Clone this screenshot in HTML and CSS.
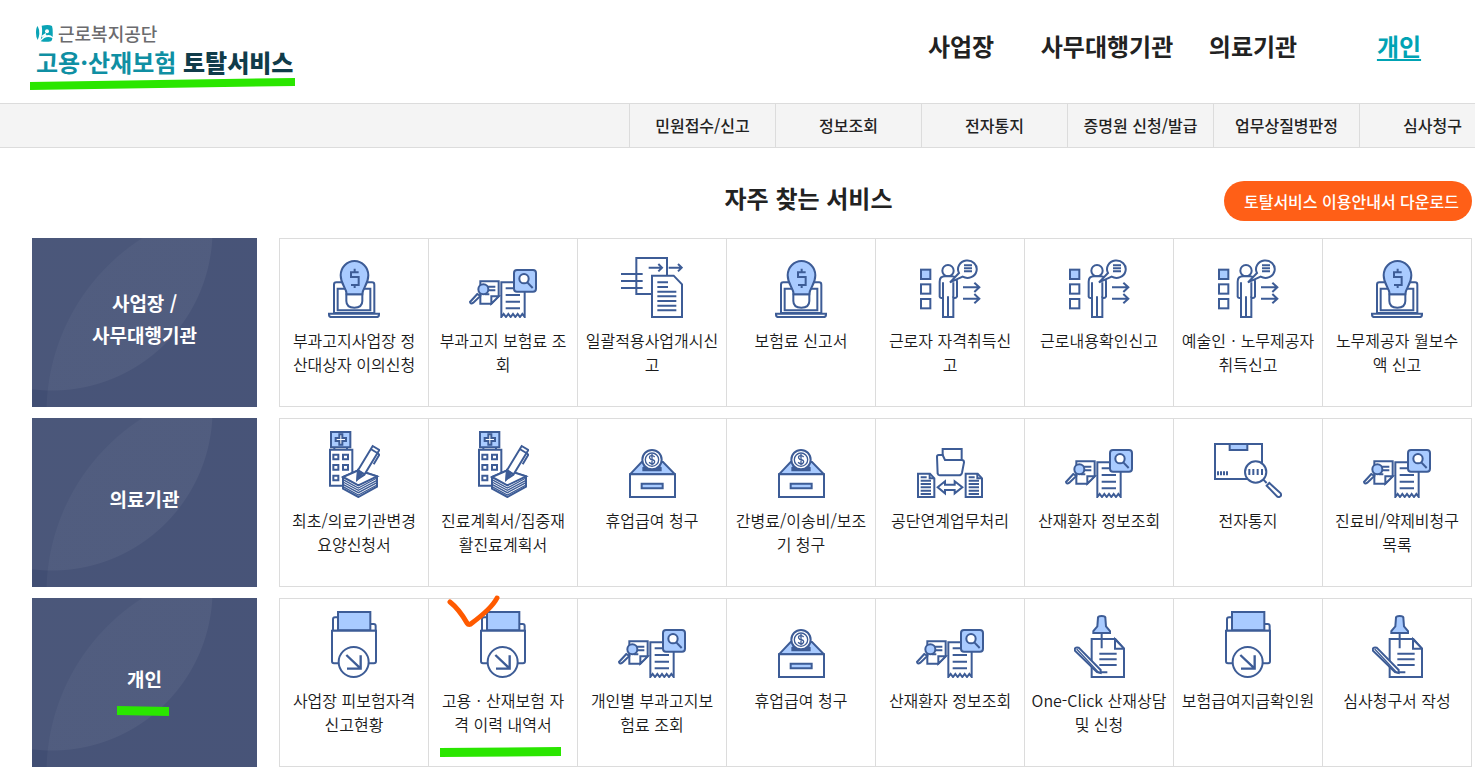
FILE: index.html
```html
<!DOCTYPE html>
<html lang="ko">
<head>
<meta charset="utf-8">
<meta name="viewport" content="width=device-width, initial-scale=1">
<title>고용·산재보험 토탈서비스</title>
<link rel="stylesheet" href="styles.css">
</head>
<body>
<svg class="sprite" aria-hidden="true">
  <symbol id="i-bulb" viewBox="159 75 156 174">
    <path class="w" d="M177 234V149q0-7 7-7h107q7 0 7 7v85z"/>
    <path class="w" d="M188 226V161h98v65z"/>
    <path class="w" d="M162 236h150v3q0 7-8 7H170q-8 0-8-7z"/>
    <path class="w" d="M214 178h48v20q0 20-24 20t-24-20z"/>
    <path class="b" d="M215 178c0-20-18-28-18-57a41.500 43 0 0 1 83 0c0 29-18 37-18 57z"/>
    <path class="l" d="M251 112h-23v14h23v24h-23M239 101v11M239 150v9"/>
  </symbol>
  <symbol id="i-docs" viewBox="583 102 204 147">
    <path class="w" d="M617 139h55v45l-22 22h-33z"/>
    <path class="w" d="M650 206v-22h22z"/>
    <path class="l" d="M630 155h32M640 166h22M630 178h14"/>
    <path class="w" d="M608 177l-22 24q2 8 10 2l21-20z"/>
    <circle class="b" cx="626" cy="163" r="15"/>
    <path class="w" d="M680 246V142h70v104l-7-9-7 9-7-9-7 9-7-9-7 9-7-9-7 9-7-9z"/>
    <path class="l" d="M693 160h28M693 180h43M693 200h43M693 220h43"/>
    <rect class="b" x="718" y="105" width="66" height="65" rx="9"/>
    <circle class="w" cx="748" cy="131" r="14"/>
    <path class="l" d="M758 142l16 17"/>
  </symbol>
  <symbol id="i-transfer" viewBox="138 66 186 183">
    <path class="w" d="M184 69h92v108h-92z"/>
    <path class="l" d="M138 117h65M138 138h65M138 159h65M221 98h39M250 87l11 11-11 11M281 98h38M309 87l11 11-11 11"/>
    <path class="w" d="M231 122h65l25 26v98h-90z"/>
    <path class="l" d="M247 142h32M247 156h32M247 170h57M247 184h57M247 198h57M247 212h57M247 226h57"/>
  </symbol>
  <symbol id="i-person" viewBox="150 72 183 177">
    <rect class="b" x="153" y="104" width="28" height="28"/>
    <rect class="w" x="153" y="148" width="28" height="28"/>
    <rect class="w" x="153" y="192" width="28" height="28"/>
    <circle class="w" cx="234" cy="107" r="17"/>
    <path class="w" d="M209 185v-45q0-16 16-16h20q16 0 16 16v45q-3 6-11 3v58h-31v-58q-8 3-10-3z"/>
    <path class="l" d="M219 188v-46M250 188v-46M234 246v-62"/>
    <path class="w" d="M240 142l27-28a28 26 0 1 1 11 11z"/>
    <path class="l" d="M282 91h24M282 100h24M282 109h24M279 157h50M313 143l15 14-15 14M279 191h50M313 177l15 14-15 14"/>
  </symbol>
  <symbol id="i-hospital" viewBox="162 48 153 201">
    <path class="w" d="M165 104h67v108h-67zM178 96h38v8h-38z"/>
    <path class="b" d="M168 51h58v46h-58z"/>
    <path class="w" d="M193 58h9v11h11v9h-11v11h-9V78h-11v-9h11z"/>
    <path class="w" d="M175 119h15v14h-15zM204 119h15v14h-15zM175 150h15v14h-15zM204 150h15v14h-15zM175 182h15v14h-15z"/>
    <path class="w" d="M204 221l46 25 56-31V184l-56-18-46 20z"/>
    <path class="l s" d="M204 194l46 25 56-30M204 201l46 25 56-30M204 208l46 25 56-30M204 215l46 25 56-30"/>
    <path class="w" d="M204 186l46 25 56-27-56-18z"/>
    <path class="w" d="M247 193l2-27 44-73 20 12-45 74z"/>
    <path class="l" d="M249 166l20 12M287 102l20 12M307 114l6 5-17 29"/>
    <path class="d" d="M247 193l2-27 13 9z"/>
  </symbol>
  <symbol id="i-box" viewBox="162 102 141 147">
    <path class="b" d="M165 178l35-37h64l36 37z"/>
    <path class="d" d="M205 166v-8l12-8h28l12 8v8z"/>
    <circle class="w" cx="231" cy="134" r="29"/>
    <circle class="l s" cx="231" cy="134" r="20"/>
    <path class="l s" d="M239 126q-4-5-10-4-7 1-5 7t10 6q7 2 4 8t-10 3l-6-4M231 117v34"/>
    <path class="w" d="M165 178h135v68H165z"/>
    <path class="b" d="M200 206h63v14h-63z"/>
  </symbol>
  <symbol id="i-folder" viewBox="141 99 198 150">
    <path class="w" d="M218 102h57v54h-57z"/>
    <path class="w" d="M203 177l-2-52q0-5 5-5h12l7 15h50q7 0 7 7l-6 31q-2 8-9 8h-58q-5 0-6-5z"/>
    <path class="w" d="M144 176h36l13 14v56h-49zM287 176h36l13 14v56h-49z"/>
    <path class="l" d="M179 177v13h13M322 177v13h13"/>
    <path class="l" d="M152 187h18M152 197h31M152 207h31M152 217h31M152 227h31M152 237h31M296 187h18M296 197h31M296 207h31M296 217h31M296 227h31M296 237h31"/>
    <path class="w" d="M203 217l22-18v10h29v-10l23 18-23 18v-10h-29v10z"/>
  </symbol>
  <symbol id="i-package" viewBox="150 84 204 165">
    <path class="w" d="M153 87h141v105H153z"/>
    <path class="b" d="M197 87h53v18h-53z"/>
    <path class="l" d="M162 169v12M171 169v12M180 169v12M189 169v12M298 194l10 10"/>
    <circle class="w" cx="275" cy="171" r="32"/>
    <path class="l" d="M256 162v18M268 162v18M281 162v18M294 162v18"/>
    <path class="w" d="M308 212l8-8 34 31q3 6-1 9-4 4-9 1z"/>
  </symbol>
  <symbol id="i-download" viewBox="168 57 138 201">
    <path class="w" d="M174 116V82q0-6 6-6h14l6 20h96q6 0 6 6v14z"/>
    <path class="b" d="M189 60h97v55h-97z"/>
    <path class="w" d="M171 116h132v92q0 6-6 6H177q-6 0-6-6z"/>
    <circle class="w" cx="236" cy="210" r="45"/>
    <path class="l t" d="M214 189l43 41M257 190v40h-41"/>
  </symbol>
  <symbol id="i-pin" viewBox="162 69 153 189">
    <path class="w" d="M215 141h71l26 29v85h-97z"/>
    <path class="w" d="M285 142v28h27z"/>
    <path class="l" d="M238 185h52M238 202h52M238 219h52M236 241h26M245 123v46"/>
    <path class="b" d="M234 77q0-5 11-5t11 5l2 26 12 14v6h-50v-6l12-14z"/>
    <path class="w" d="M165 176q-3-12 11-9l66 67v9l-11-3z"/>
    <path class="l s" d="M170 171l66 70"/>
  </symbol>
</svg>

<header class="header">
  <a class="logo" href="#">
    <span class="logo-org">
      <svg class="logo-mark" viewBox="0 0 51 51" aria-hidden="true">
        <path d="M5 3q6 12 5 24-1 9-5 18Q0 38 0 23 0 8 5 3z"/>
        <path d="M17 2q22-4 31 1 3 8 2 33-7-8-17-5l-7-2q-7 8-12 15 7-20 3-42z"/>
        <path d="M14 49q16-20 35-10 0 7-4 10-15 3-31 0z"/>
        <path d="M17 35l13-9" stroke="#fff" stroke-width="4"/>
        <circle cx="33" cy="19" r="6" fill="#fff"/>
      </svg>
      근로복지공단
    </span>
    <span class="logo-name">고용·산재보험 <b>토탈서비스</b></span>
    <svg class="mark mark-logo" viewBox="0 0 265 12" aria-hidden="true"><path d="M0 4L265 0v8L0 12z"/></svg>
  </a>
  <nav class="gnb" aria-label="주 메뉴">
    <a href="#">사업장</a>
    <a href="#">사무대행기관</a>
    <a href="#">의료기관</a>
    <a class="on" href="#" aria-current="page">개인</a>
  </nav>
</header>

<nav class="subnav" aria-label="개인 메뉴">
  <div class="subnav-list">
    <a href="#">민원접수/신고</a>
    <a href="#">정보조회</a>
    <a href="#">전자통지</a>
    <a href="#">증명원 신청/발급</a>
    <a href="#">업무상질병판정</a>
    <a href="#">심사청구</a>
  </div>
</nav>

<main class="main">
  <div class="title-row">
    <h1 class="title">자주 찾는 서비스</h1>
    <button class="guide" type="button">토탈서비스 이용안내서 다운로드</button>
  </div>

  <section class="group">
    <h2 class="group-name">사업장 /<br>사무대행기관</h2>
    <div class="cards">
      <a class="card" href="#"><span class="pic"><svg width="52" height="58"><use href="#i-bulb"/></svg></span>부과고지사업장 정산대상자 이의신청</a>
      <a class="card" href="#"><span class="pic"><svg width="68" height="49"><use href="#i-docs"/></svg></span>부과고지 보험료 조회</a>
      <a class="card" href="#"><span class="pic"><svg width="62" height="61"><use href="#i-transfer"/></svg></span>일괄적용사업개시신고</a>
      <a class="card" href="#"><span class="pic"><svg width="52" height="58"><use href="#i-bulb"/></svg></span>보험료 신고서</a>
      <a class="card" href="#"><span class="pic"><svg width="61" height="59"><use href="#i-person"/></svg></span>근로자 자격취득신고</a>
      <a class="card" href="#"><span class="pic"><svg width="61" height="59"><use href="#i-person"/></svg></span>근로내용확인신고</a>
      <a class="card" href="#"><span class="pic"><svg width="61" height="59"><use href="#i-person"/></svg></span>예술인ㆍ노무제공자 취득신고</a>
      <a class="card" href="#"><span class="pic"><svg width="52" height="58"><use href="#i-bulb"/></svg></span>노무제공자 월보수액 신고</a>
    </div>
  </section>

  <section class="group">
    <h2 class="group-name">의료기관</h2>
    <div class="cards">
      <a class="card" href="#"><span class="pic"><svg width="51" height="67"><use href="#i-hospital"/></svg></span>최초/의료기관변경 요양신청서</a>
      <a class="card" href="#"><span class="pic"><svg width="51" height="67"><use href="#i-hospital"/></svg></span>진료계획서/집중재활진료계획서</a>
      <a class="card" href="#"><span class="pic"><svg width="47" height="49"><use href="#i-box"/></svg></span>휴업급여 청구</a>
      <a class="card" href="#"><span class="pic"><svg width="47" height="49"><use href="#i-box"/></svg></span>간병료/이송비/보조기 청구</a>
      <a class="card" href="#"><span class="pic"><svg width="66" height="50"><use href="#i-folder"/></svg></span>공단연계업무처리</a>
      <a class="card" href="#"><span class="pic"><svg width="68" height="49"><use href="#i-docs"/></svg></span>산재환자 정보조회</a>
      <a class="card" href="#"><span class="pic"><svg width="68" height="55"><use href="#i-package"/></svg></span>전자통지</a>
      <a class="card" href="#"><span class="pic"><svg width="68" height="49"><use href="#i-docs"/></svg></span>진료비/약제비청구 목록</a>
    </div>
  </section>

  <section class="group">
    <h2 class="group-name">개인
      <svg class="mark mark-group" viewBox="0 0 52 11" aria-hidden="true"><path d="M0 0l52 1v9L0 9z"/></svg>
    </h2>
    <div class="cards">
      <a class="card" href="#"><span class="pic"><svg width="46" height="67"><use href="#i-download"/></svg></span>사업장 피보험자격 신고현황</a>
      <a class="card" href="#"><span class="pic"><svg width="46" height="67"><use href="#i-download"/></svg></span>고용ㆍ산재보험 자격 이력 내역서
        <svg class="mark mark-check" viewBox="0 0 53 33" aria-hidden="true"><path d="M3 7q9 7 17 21 2 3 5 0Q45 13 50 3"/></svg>
        <svg class="mark mark-card" viewBox="0 0 121 10" aria-hidden="true"><path d="M0 1l121-1v9L0 10z"/></svg>
      </a>
      <a class="card" href="#"><span class="pic"><svg width="68" height="49"><use href="#i-docs"/></svg></span>개인별 부과고지보험료 조회</a>
      <a class="card" href="#"><span class="pic"><svg width="47" height="49"><use href="#i-box"/></svg></span>휴업급여 청구</a>
      <a class="card" href="#"><span class="pic"><svg width="68" height="49"><use href="#i-docs"/></svg></span>산재환자 정보조회</a>
      <a class="card card-wide" href="#"><span class="pic"><svg width="51" height="63"><use href="#i-pin"/></svg></span>One-Click 산재상담 및 신청</a>
      <a class="card" href="#"><span class="pic"><svg width="46" height="67"><use href="#i-download"/></svg></span>보험급여지급확인원</a>
      <a class="card" href="#"><span class="pic"><svg width="51" height="63"><use href="#i-pin"/></svg></span>심사청구서 작성</a>
    </div>
  </section>
</main>
</body>
</html>
```

FILE: styles.css
```css
* { box-sizing: border-box; }

body {
  margin: 0;
  background: #fff;
  color: #222;
  font-family: "Noto Sans CJK KR", "Noto Sans", sans-serif;
  font-size: 16px;
}

a { color: inherit; text-decoration: none; }

.sprite { position: absolute; width: 0; height: 0; }

/* icon strokes and fills */
.w, .b, .l, .d { stroke: #3d5c96; stroke-width: 6; }
.w { fill: #fff; }
.b { fill: #a9cbff; }
.l { fill: none; }
.d { fill: #3d5c96; }
.t { stroke-width: 7; }
.s { stroke-width: 4; }

.header {
  display: flex;
  justify-content: space-between;
  align-items: flex-start;
  min-height: 103px;
  padding: 22px 3px 0 36px;
}

.logo {
  position: relative;
  display: flex;
  flex-direction: column;
}

.logo-org {
  display: flex;
  align-items: center;
  gap: 5px;
  color: #6b6b6e;
  font-size: 18px;
  font-weight: 500;
  line-height: 22px;
}

.logo-mark { width: 17px; height: 17px; fill: #0aa3b5; }

.logo-name {
  color: #0f8fa3;
  font-size: 24px;
  font-weight: 700;
  line-height: 36px;
}

.logo-name b { color: #103c4a; }

.mark { position: absolute; fill: #2ae600; }
.mark-logo { left: -6px; top: 56px; width: 265px; height: 12px; }
.mark-group { left: 85px; top: 108px; width: 52px; height: 11px; }
.mark-card { left: 11px; top: 148px; width: 121px; height: 10px; }
.mark-check {
  left: 18px;
  top: -4px;
  width: 53px;
  height: 33px;
  fill: none;
  stroke: #ff5a00;
  stroke-width: 5;
  stroke-linecap: round;
}

.gnb {
  display: grid;
  grid-template-columns: repeat(4, 146px);
  font-size: 24px;
  font-weight: 700;
  line-height: 48px;
  text-align: center;
}

.gnb .on {
  color: #00a3b4;
  text-decoration: underline;
  text-decoration-thickness: 2px;
  text-underline-offset: 3px;
}

.subnav {
  overflow: hidden;
  background: #f4f4f4;
  border-top: 1px solid #dcdcdc;
  border-bottom: 1px solid #dcdcdc;
}

.subnav-list {
  display: flex;
  justify-content: flex-end;
  margin-right: -30px;
}

.subnav a {
  flex: 0 0 146px;
  border-left: 1px solid #dcdcdc;
  font-weight: 500;
  line-height: 43px;
  text-align: center;
}

.main { padding: 0 3px 15px 32px; }

.title-row {
  display: grid;
  grid-template-columns: 1fr auto 1fr;
  align-items: start;
  padding: 33px 0 17px 113px;
}

.title {
  grid-column: 2;
  margin: 0;
  font-size: 24px;
  font-weight: 700;
  line-height: 34px;
}

.guide {
  justify-self: end;
  height: 40px;
  padding: 0 13px 0 20px;
  border: 0;
  border-radius: 20px;
  background: #ff5f17;
  color: #fff;
  font: 500 16px "Noto Sans CJK KR", sans-serif;
  white-space: nowrap;
}

.group {
  display: grid;
  grid-template-columns: 225px 1fr;
  gap: 22px;
}

.group + .group { margin-top: 11px; }

.group-name {
  position: relative;
  display: flex;
  align-items: center;
  justify-content: center;
  min-height: 169px;
  margin: 0;
  padding-bottom: 7px;
  background:
    radial-gradient(circle at 20px -8px, rgba(255, 255, 255, .05) 160px, transparent 161px),
    radial-gradient(circle at 222px 175px, rgba(255, 255, 255, .035) 207px, transparent 208px),
    #414e73;
  color: #fff;
  font-size: 19px;
  font-weight: 700;
  line-height: 32px;
  text-align: center;
}

.cards {
  display: grid;
  grid-template-columns: repeat(8, 1fr);
  border: 1px solid #dcdcdc;
  border-left: 0;
}

.card {
  position: relative;
  padding: 0 7px;
  border-left: 1px solid #dcdcdc;
  color: #1a1a1a;
  font-weight: 350;
  line-height: 24px;
  text-align: center;
}

.card-wide { padding: 0 4px; }

.pic {
  display: flex;
  align-items: flex-end;
  justify-content: center;
  height: 79px;
  margin-bottom: 10px;
}
```
